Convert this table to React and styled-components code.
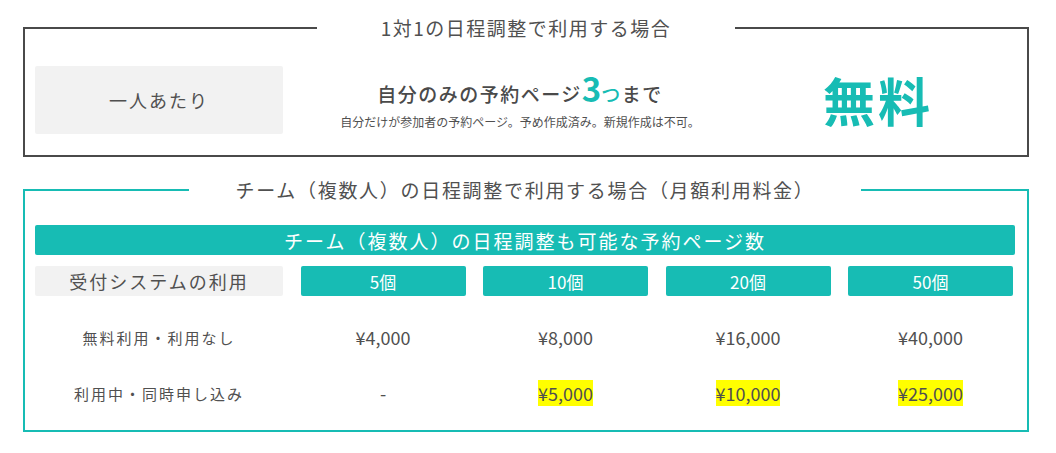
import React from 'react';
import styled, { createGlobalStyle } from 'styled-components';

const GlobalStyle = createGlobalStyle`
  body {
    margin: 0;
    background: #fff;
    font-family: "Noto Sans CJK JP", "Noto Sans", sans-serif;
    color: #505050;
  }
`;

const TEAL = '#17bcb4';

// 月額プランの列データ
const pageCounts = ['5個', '10個', '20個', '50個'];
const priceRows = [
  { label: '無料利用・利用なし', prices: ['¥4,000', '¥8,000', '¥16,000', '¥40,000'], mark: false },
  { label: '利用中・同時申し込み', prices: ['-', '¥5,000', '¥10,000', '¥25,000'], mark: true },
];

const App = () => {
  return (
    <>
      <GlobalStyle />
      <Page>
        <Section $color="#4a4a4a" $pad="25px 10px 21px">
          <Legend $width="418px" $spacing="1.5px">1対1の日程調整で利用する場合</Legend>
          <SingleRow>
            <GreyCell $height="68px">一人あたり</GreyCell>
            <Middle>
              <Lead>
                自分のみの予約ページ<Num>3</Num><Teal>つ</Teal>まで
              </Lead>
              <Note>自分だけが参加者の予約ページ。予め作成済み。新規作成は不可。</Note>
            </Middle>
            <Free>無料</Free>
          </SingleRow>
        </Section>

        <Section $color={TEAL} $pad="22px 12px 9px 10px" $top="20px">
          <Legend $width="672px" $spacing="1.7px">チーム（複数人）の日程調整で利用する場合（月額利用料金）</Legend>
          <Banner>チーム（複数人）の日程調整も可能な予約ページ数</Banner>
          <PriceRow $height="30px" $top="11px">
            <GreyCell $height="30px">受付システムの利用</GreyCell>
            {pageCounts.map((item) => (
              <HeadCell key={item}>{item}</HeadCell>
            ))}
          </PriceRow>
          <PriceRows>
            {priceRows.map((row) => (
              <PriceRow key={row.label} $height="56px">
                <RowLabel>{row.label}</RowLabel>
                {row.prices.map((p, idx) => (
                  <Price key={idx}>
                    {row.mark && p !== '-' ? <Mark>{p}</Mark> : p}
                  </Price>
                ))}
              </PriceRow>
            ))}
          </PriceRows>
        </Section>
      </Page>
    </>
  );
};

const Page = styled.div`
  width: 1006px;
  padding: 15px 0 0 23px;
`;

const Section = styled.fieldset`
  margin: ${(p) => p.$top || '0'} 0 0;
  padding: ${(p) => p.$pad};
  border: 2px solid ${(p) => p.$color};
  min-width: 0;
`;

const Legend = styled.legend`
  width: ${(p) => p.$width};
  margin: 0 auto;
  padding: 0;
  text-align: center;
  font-size: 19px;
  line-height: 26px;
  letter-spacing: ${(p) => p.$spacing};
  color: #505050;
`;

const SingleRow = styled.div`
  display: grid;
  grid-template-columns: 248px 474px 242px;
  align-items: center;
`;

const GreyCell = styled.div`
  height: ${(p) => p.$height};
  background: #f2f2f2;
  border-radius: 2px;
  display: flex;
  align-items: center;
  justify-content: center;
  font-size: 18px;
  letter-spacing: 2px;
  color: #505050;
`;

const Middle = styled.div`
  display: flex;
  flex-direction: column;
  align-items: center;
  padding-top: 2px;
`;

const Lead = styled.div`
  font-size: 19px;
  line-height: 32px;
  font-weight: 500;
  letter-spacing: 1.5px;
  color: #4a4a4a;
`;

const Num = styled.span`
  font-size: 33px;
  font-weight: 700;
  color: ${TEAL};
  letter-spacing: 0;
`;

const Teal = styled.span`
  color: ${TEAL};
`;

const Note = styled.div`
  margin-top: 4px;
  font-size: 12px;
  line-height: 16px;
  color: #505050;
`;

const Free = styled.div`
  text-align: center;
  font-size: 52px;
  line-height: 60px;
  font-weight: 700;
  letter-spacing: 3px;
  color: ${TEAL};
`;

const Banner = styled.div`
  height: 30px;
  background: ${TEAL};
  border-radius: 2px;
  display: flex;
  align-items: center;
  justify-content: center;
  font-size: 19px;
  letter-spacing: 2px;
  color: #fff;
`;

const PriceRows = styled.div`
  margin-top: 13px;
  display: flex;
  flex-direction: column;
`;

const PriceRow = styled.div`
  margin-top: ${(p) => p.$top || '0'};
  height: ${(p) => p.$height};
  display: grid;
  grid-template-columns: 248px repeat(4, 165px);
  column-gap: 17.5px;
`;

const HeadCell = styled.div`
  background: ${TEAL};
  border-radius: 2px;
  display: flex;
  align-items: center;
  justify-content: center;
  font-size: 17px;
  color: #fff;
`;

const RowLabel = styled.div`
  display: flex;
  align-items: center;
  justify-content: center;
  font-size: 15px;
  letter-spacing: 2px;
  color: #505050;
  white-space: nowrap;
`;

const Price = styled.div`
  display: flex;
  align-items: center;
  justify-content: center;
  font-size: 18px;
  color: #505050;
`;

const Mark = styled.span`
  background: #ffff00;
`;

export default App;
